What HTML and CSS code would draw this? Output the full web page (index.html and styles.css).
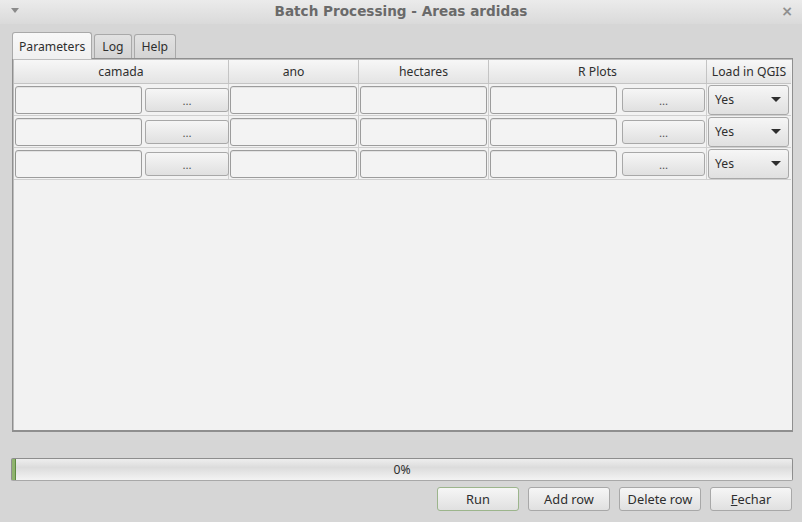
FILE: index.html
```html
<!DOCTYPE html>
<html>
<head>
<meta charset="utf-8">
<link rel="stylesheet" href="styles.css">
</head>
<body>
<div class="window">
  <div class="titlebar">
    <span class="menu-arrow"></span>
    <span class="title">Batch Processing - Areas ardidas</span>
    <span class="close">×</span>
  </div>
  <div class="body">
    <div class="tabs">
      <div class="tab active">Parameters</div>
      <div class="tab">Log</div>
      <div class="tab">Help</div>
    </div>
    <div class="frame">
      <div class="grid">
        <div class="hcell">camada</div>
        <div class="hcell">ano</div>
        <div class="hcell">hectares</div>
        <div class="hcell">R Plots</div>
        <div class="hcell last">Load in QGIS</div>

        <div class="cell file"><div class="edit"></div><div class="btn small">...</div></div>
        <div class="cell"><div class="edit"></div></div>
        <div class="cell"><div class="edit"></div></div>
        <div class="cell file"><div class="edit"></div><div class="btn small wide">...</div></div>
        <div class="cell last"><div class="combo"><span>Yes</span><span class="caret"></span></div></div>

        <div class="cell file"><div class="edit"></div><div class="btn small">...</div></div>
        <div class="cell"><div class="edit"></div></div>
        <div class="cell"><div class="edit"></div></div>
        <div class="cell file"><div class="edit"></div><div class="btn small wide">...</div></div>
        <div class="cell last"><div class="combo"><span>Yes</span><span class="caret"></span></div></div>

        <div class="cell file"><div class="edit"></div><div class="btn small">...</div></div>
        <div class="cell"><div class="edit"></div></div>
        <div class="cell"><div class="edit"></div></div>
        <div class="cell file"><div class="edit"></div><div class="btn small wide">...</div></div>
        <div class="cell last"><div class="combo"><span>Yes</span><span class="caret"></span></div></div>
      </div>
    </div>
    <div class="progress">
      <div class="chunk"></div>
      <span class="ptext">0%</span>
    </div>
    <div class="buttons">
      <div class="btn big default">Run</div>
      <div class="btn big">Add row</div>
      <div class="btn big">Delete row</div>
      <div class="btn big"><span class="u">F</span>echar</div>
    </div>
  </div>
</div>
</body>
</html>
```

FILE: styles.css
```css
html, body {
  margin: 0;
  padding: 0;
}
body {
  width: 802px;
  height: 522px;
  background: #d6d6d6;
  font-family: "Noto Sans", "DejaVu Sans", sans-serif;
  font-size: 12.2px;
  color: #2e2e2e;
  overflow: hidden;
}
.window {
  width: 802px;
  height: 522px;
  display: flex;
  flex-direction: column;
}
.titlebar {
  height: 24px;
  background: linear-gradient(#ebebeb, #dadada);
  display: flex;
  align-items: center;
  justify-content: center;
  position: relative;
}
.title {
  font-family: "DejaVu Sans", sans-serif;
  font-weight: bold;
  font-size: 13.6px;
  color: #6a6a6a;
  margin-top: -2px;
}
.menu-arrow {
  position: absolute;
  left: 11px;
  top: 8px;
  width: 0;
  height: 0;
  border-left: 4px solid transparent;
  border-right: 4px solid transparent;
  border-top: 5px solid #8a8a8a;
}
.close {
  position: absolute;
  right: 9px;
  top: 3px;
  font-family: "DejaVu Sans", sans-serif;
  font-size: 14px;
  color: #909090;
  font-weight: bold;
}
.body {
  padding: 8px 9px 0 11px;
  display: flex;
  flex-direction: column;
}
.tabs {
  display: flex;
  align-items: flex-end;
  height: 26px;
  padding-left: 1px;
  gap: 2px;
}
.tab {
  height: 23px;
  padding: 0 7px;
  border: 1px solid #a9a9a9;
  border-bottom: none;
  border-radius: 3px 3px 0 0;
  background: linear-gradient(#e2e2e2, #d4d4d4);
  display: flex;
  align-items: center;
  color: #2e2e2e;
}
.tab.active {
  height: 26px;
  background: linear-gradient(#f8f8f8, #f0f0f0);
  padding: 0 6px;
  margin-bottom: -1px;
  position: relative;
  z-index: 1;
}
.frame {
  margin-left: 1px;
  height: 370px;
  border: 1px solid #8f8f8f;
  border-bottom-width: 2px;
  box-shadow: inset 1px 1px 0 #bdbdbd;
  background: #f2f2f2;
  padding: 1px 1px 0 1px;
}
.grid {
  display: grid;
  grid-template-columns: 215px 130px 130px 218px 84px;
  grid-template-rows: 24px 32px 32px 32px;
}
.hcell {
  background: linear-gradient(#f7f7f7, #e4e4e4);
  border-right: 1px solid #c4c4c4;
  border-bottom: 1px solid #c4c4c4;
  display: flex;
  align-items: center;
  justify-content: center;
  color: #2e2e2e;
  padding-bottom: 1px;
}
.hcell.last {
  border-right: none;
}
.cell {
  border-right: 1px solid #cfcfcf;
  border-bottom: 1px solid #cfcfcf;
  display: flex;
  align-items: center;
  padding-left: 1px;
  gap: 2px;
}
.cell.last {
  border-right: none;
  padding-left: 0;
}
.edit {
  width: 125px;
  height: 26px;
  border: 1px solid #9c9c9c;
  border-radius: 3px;
  background: #f3f3f3;
  box-shadow: inset 0 1px 0 #e2e2e2;
  flex: none;
}
.btn {
  border: 1px solid #a8a8a8;
  border-radius: 3px;
  background: linear-gradient(#f6f6f6, #e0e0e0);
  display: flex;
  align-items: center;
  justify-content: center;
  color: #2e2e2e;
  box-sizing: border-box;
  flex: none;
}
.btn.small {
  width: 84px;
  height: 24px;
  margin-left: 1px;
  color: #555;
  font-size: 11.5px;
  padding-top: 1px;
}
.btn.small.wide {
  width: 83px;
  margin-left: 3px;
}
.combo {
  width: 81px;
  height: 30px;
  box-sizing: border-box;
  border: 1px solid #a8a8a8;
  border-radius: 3px;
  background: linear-gradient(#f6f6f6, #e0e0e0);
  display: flex;
  align-items: center;
  justify-content: space-between;
  padding: 0 7px 0 6px;
  margin-left: 1px;
  color: #2e2e2e;
}
.caret {
  width: 0;
  height: 0;
  border-left: 5px solid transparent;
  border-right: 5px solid transparent;
  border-top: 5px solid #2e2e2e;
}
.progress {
  margin-top: 26px;
  height: 23px;
  box-sizing: border-box;
  border: 1px solid #8e8e8e;
  border-bottom-color: #a8a8a8;
  border-radius: 2px;
  background: linear-gradient(#eeeeee, #dcdcdc 40%, #f3f3f3);
  position: relative;
  display: flex;
  align-items: center;
  justify-content: center;
}
.chunk {
  position: absolute;
  left: 0;
  top: 0;
  bottom: 0;
  width: 3px;
  background: #8fb36e;
  border-right: 1px solid #5d8a40;
}
.ptext {
  color: #2e2e2e;
}
.buttons {
  margin-top: 6px;
  display: flex;
  justify-content: flex-end;
  gap: 9px;
  padding-right: 1px;
}
.btn.big {
  width: 82px;
  height: 24px;
  font-size: 12.8px;
}
.btn.default {
  border-color: #9cb58c;
}
.u {
  text-decoration: underline;
}
```
